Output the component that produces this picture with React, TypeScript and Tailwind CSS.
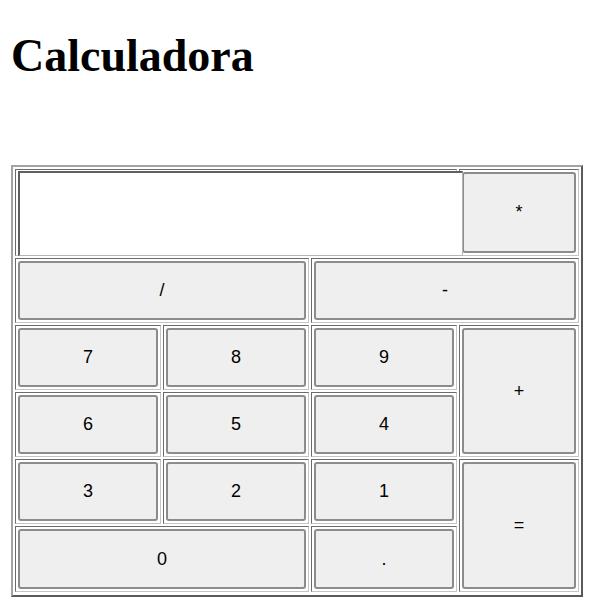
import React from 'react'

type Key = { label: string; span?: string }

// one cell of the keypad grid, inset border like a bordered table cell
function Cell({ span = '', children }: { span?: string; children: React.ReactNode }) {
  return (
    <div
      className={
        'border border-t-[#6b6b6b] border-l-[#6b6b6b] border-r-[#c4c4c4] border-b-[#c4c4c4] p-[2px] ' + span
      }
    >
      {children}
    </div>
  )
}

function KeyButton({ label, onPress }: { label: string; onPress: (k: string) => void }) {
  return (
    <button
      type="button"
      onClick={() => onPress(label)}
      className="w-full h-full bg-[#efefef] border-2 border-[#8c8c8c] rounded-[3px] text-[18px] text-black font-['Liberation_Sans',Arial,sans-serif]"
    >
      {label}
    </button>
  )
}

const rows: Key[] = [
  { label: '/', span: 'col-span-2' },
  { label: '-', span: 'col-span-2' },
  { label: '7' },
  { label: '8' },
  { label: '9' },
  { label: '+', span: 'row-span-2' },
  { label: '6' },
  { label: '5' },
  { label: '4' },
  { label: '3' },
  { label: '2' },
  { label: '1' },
  { label: '=', span: 'row-span-2' },
  { label: '0', span: 'col-span-2' },
  { label: '.' },
]

export default function App() {
  const [display, setDisplay] = React.useState('')

  const press = (k: string) => {
    if (k === '=') {
      try {
        // eslint-disable-next-line no-new-func
        const result = Function('"use strict";return (' + display + ')')()
        setDisplay(String(result))
      } catch {
        setDisplay('')
      }
      return
    }
    setDisplay(display + k)
  }

  return (
    <div className="min-h-[612px] bg-white px-[11px]">
      <h1 className="pt-[30px] text-[46px] leading-[52px] font-bold text-black font-['Liberation_Serif','Times_New_Roman',serif]">
        Calculadora
      </h1>

      <div className="mt-[83px] inline-grid grid-cols-[146px_146px_146px_120px] grid-rows-[87px_65px_65px_65px_65px_66px] gap-[2px] p-[2px] pb-[3px] border-2 border-t-[#a3a3a3] border-l-[#a3a3a3] border-r-[#5a5a5a] border-b-[#5a5a5a]">
        <Cell span="col-span-3 overflow-visible">
          <input
            type="text"
            value={display}
            onChange={(e) => setDisplay(e.target.value)}
            className="relative z-10 block -mt-px w-[445px] max-w-none h-[85px] bg-white border-t-2 border-l-2 border-r border-b border-t-[#5f5f5f] border-l-[#5f5f5f] border-r-[#b5b5b5] border-b-[#b5b5b5] outline-none"
          />
        </Cell>
        <Cell>
          <KeyButton label="*" onPress={press} />
        </Cell>
        {rows.map((k) => (
          <Cell key={k.label} span={k.span}>
            <KeyButton label={k.label} onPress={press} />
          </Cell>
        ))}
      </div>
    </div>
  )
}
